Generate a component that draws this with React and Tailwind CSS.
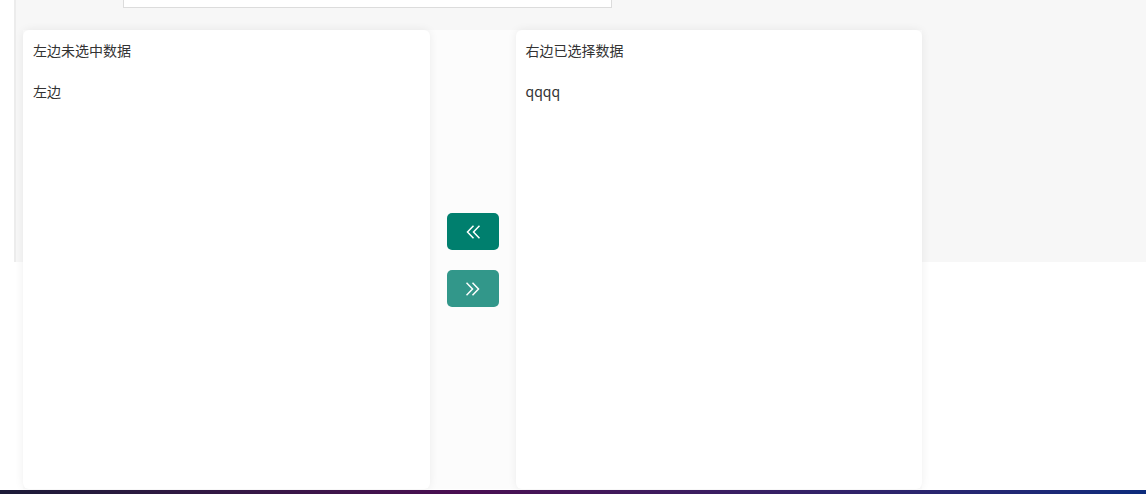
const font = { fontFamily: '"Noto Sans CJK SC", "Noto Sans", sans-serif' };

function Chevrons({ dir }) {
  const d = dir === 'left'
    ? ['M7.5 0.8 L1.5 7 L7.5 13.2', 'M13.5 0.8 L7.5 7 L13.5 13.2']
    : ['M0.5 0.8 L6.5 7 L0.5 13.2', 'M6.5 0.8 L12.5 7 L6.5 13.2'];
  return (
    <svg width="14" height="14" viewBox="0 0 14 14" fill="none" stroke="currentColor" strokeWidth="1.5">
      <path d={d[0]} />
      <path d={d[1]} />
    </svg>
  );
}

function ListCard({ title, items }) {
  return (
    <div className="w-[407px] h-[459px] bg-white rounded-md shadow-[0_0_10px_rgba(0,0,0,0.07)] px-[10px] py-[9px] text-[14px] text-[#333]">
      <div className="leading-[22px]">{title}</div>
      <ul className="mt-[19px]">
        {items.map((it) => (
          <li key={it} className="leading-[22px]">{it}</li>
        ))}
      </ul>
    </div>
  );
}

export default function App() {
  return (
    <div className="w-[1146px] h-[494px] bg-white overflow-hidden flex flex-col" style={font}>
      <div className="flex h-[490px]">
        <div className="w-[16px] shrink-0 border-r-2 border-[#ececec] h-[262px]" />
        <div className="flex-1 h-[262px] bg-[#f7f7f7]">
          {/* search box cut off at top */}
          <div className="ml-[107px] w-[489px] h-[8px] bg-white border border-t-0 border-[#dcdcdc]" />
          <div className="flex mt-[22px] ml-[7px] w-[899px] bg-[#fcfcfc]">
            <ListCard title="左边未选中数据" items={['左边']} />
            <div className="w-[86px] shrink-0 flex flex-col items-center pt-[183px] gap-[20px]">
              <button className="w-[52px] h-[37px] rounded-[5px] bg-[#007f6e] flex items-center justify-center text-white">
                <Chevrons dir="left" />
              </button>
              <button className="w-[52px] h-[37px] rounded-[5px] bg-[#007f6e] opacity-80 flex items-center justify-center text-white">
                <Chevrons dir="right" />
              </button>
            </div>
            <ListCard title="右边已选择数据" items={['qqqq']} />
          </div>
        </div>
      </div>
      <div className="h-[4px] bg-gradient-to-r from-[#1c1b38] via-[#4a0e52] via-40% to-[#0b2b7c]" />
    </div>
  );
}
